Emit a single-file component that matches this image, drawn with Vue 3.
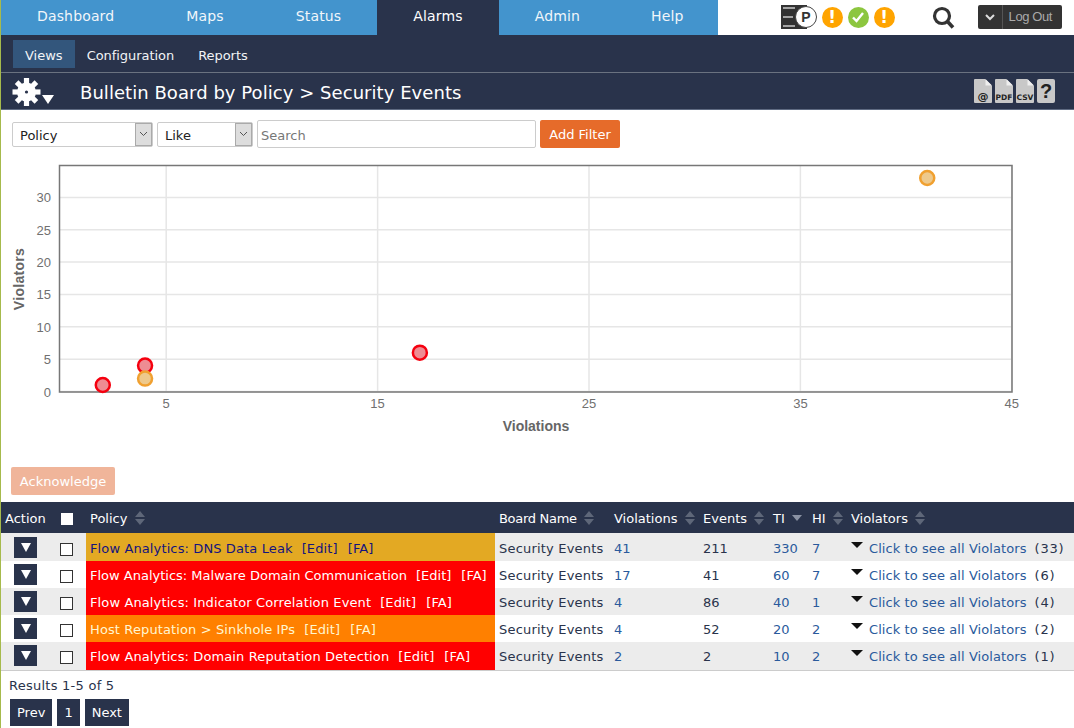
<template>
  <div class="page">
    <div class="topbar">
      <ul class="tabs">
        <li v-for="t in tabs" :key="t" :class="{ active: t === 'Alarms' }">{{ t }}</li>
      </ul>
      <div class="status-icons">
        <svg class="p-icon" width="36" height="24" viewBox="0 0 36 24">
          <rect x="0" y="0" width="26" height="24" fill="#333" />
          <path d="M2 3h4M6 3h8M2 12h4M6 12h6M2 21h4M6 21h8" stroke="#ccc" stroke-width="1.500" fill="none" />
          <circle cx="25" cy="12" r="10.500" fill="#fff" stroke="#444" stroke-width="1" />
          <text x="25" y="17" text-anchor="middle" class="p-letter">P</text>
        </svg>
        <span class="dot orange">!</span>
        <span class="dot green">
          <svg width="14" height="14" viewBox="0 0 14 14"><path d="M2 7.500l3.500 3.500L12 3" stroke="#fff" stroke-width="2.400" fill="none" /></svg>
        </span>
        <span class="dot orange">!</span>
      </div>
      <svg class="search-icon" width="23" height="24" viewBox="0 0 23 24">
        <circle cx="10" cy="10" r="7.500" fill="none" stroke="#333" stroke-width="3.200" />
        <path d="M15.500 15.500l5.500 6" stroke="#333" stroke-width="3.600" />
      </svg>
      <div class="logout">
        <span class="logout-arrow">
          <svg width="10" height="7" viewBox="0 0 10 7"><path d="M1 1l4 4 4-4" stroke="#ddd" stroke-width="2" fill="none" /></svg>
        </span>
        <span class="logout-text">Log Out</span>
      </div>
    </div>

    <div class="subnav">
      <span v-for="s in subTabs" :key="s" class="subtab" :class="{ active: s === 'Views' }">{{ s }}</span>
    </div>

    <div class="titlebar">
      <svg class="gear" width="44" height="30" viewBox="0 0 44 30">
        <g transform="translate(14.500 15)">
          <rect v-for="a in gearTeeth" :key="a" x="-2.600" y="-14" width="5.200" height="8" fill="#fff" :transform="`rotate(${a})`" />
          <circle r="9.500" fill="#fff" />
          <circle r="1.600" fill="#29334b" />
        </g>
        <path d="M30 18h12l-6 9z" fill="#fff" />
      </svg>
      <h1 class="title">Bulletin Board by Policy &gt; Security Events</h1>
      <div class="doc-icons">
        <svg v-for="d in docs" :key="d" width="18" height="24" viewBox="0 0 18 24">
          <path d="M0 1a1 1 0 0 1 1-1h10l7 7v16a1 1 0 0 1-1 1H1a1 1 0 0 1-1-1z" fill="#c8c8c8" />
          <path d="M11.500 0l6.500 6.500h-6.500z" fill="#eee" />
          <text x="9" y="20.500" text-anchor="middle" class="doc-label" :class="{ big: d === '@' }">{{ d }}</text>
        </svg>
        <div class="help-doc">?</div>
      </div>
    </div>

    <div class="filters">
      <div class="sel sel-policy"><span>Policy</span><i><svg width="9" height="6" viewBox="0 0 9 6"><path d="M1 1l3.500 3.500L8 1" stroke="#555" fill="none" /></svg></i></div>
      <div class="sel sel-like"><span>Like</span><i><svg width="9" height="6" viewBox="0 0 9 6"><path d="M1 1l3.500 3.500L8 1" stroke="#555" fill="none" /></svg></i></div>
      <input class="search" type="text" placeholder="Search" />
      <button class="add-filter">Add Filter</button>
    </div>

    <svg class="chart" width="1073" height="290" viewBox="0 0 1073 290">
      <g transform="translate(-1 -155)">
        <line v-for="x in xTicks" :key="'vx' + x" :x1="xPos(x)" :x2="xPos(x)" y1="165" y2="392" stroke="#e6e6e6" stroke-width="1.500" />
        <line v-for="y in yTicks" :key="'hy' + y" x1="59" x2="1012" :y1="yPos(y)" :y2="yPos(y)" stroke="#e6e6e6" stroke-width="1.500" />
        <path d="M59.500 165.500H1012V392H59.500z" fill="none" stroke="#777" stroke-width="1.500" />
        <text v-for="x in xTicks" :key="'tx' + x" :x="xPos(x)" y="408" text-anchor="middle" class="tick">{{ x }}</text>
        <text v-for="y in yTicks" :key="'ty' + y" x="51" :y="yPos(y) + 5" text-anchor="end" class="tick">{{ y }}</text>
        <text x="536" y="431" text-anchor="middle" class="axis-label">Violations</text>
        <text transform="translate(24 279) rotate(-90)" text-anchor="middle" class="axis-label y-label">Violators</text>
        <circle v-for="p in points" :key="p.x + '-' + p.y" :cx="xPos(p.x)" :cy="yPos(p.y)" r="7" :fill="p.fill" :stroke="p.stroke" stroke-width="2.500" />
      </g>
    </svg>

    <div class="ack-row"><button class="ack">Acknowledge</button></div>

    <table class="grid">
      <colgroup>
        <col style="width: 51px" />
        <col style="width: 34px" />
        <col style="width: 409px" />
        <col style="width: 115px" />
        <col style="width: 89px" />
        <col style="width: 70px" />
        <col style="width: 39px" />
        <col style="width: 39px" />
        <col />
      </colgroup>
      <thead>
        <tr>
          <th class="th-action">Action</th>
          <th class="th-check"><span class="head-box"></span></th>
          <th v-for="h in heads" :key="h">
            {{ h }}
            <svg v-if="h === 'TI'" class="sort" width="12" height="14" viewBox="0 0 12 14"><path d="M1 4h10l-5 6z" fill="#8a92a3" /></svg>
            <svg v-else class="sort" width="12" height="14" viewBox="0 0 12 14"><path d="M1 6l5-6 5 6zM1 8h10l-5 6z" fill="#5e6779" /></svg>
          </th>
        </tr>
      </thead>
      <tbody>
        <tr v-for="r in rows" :key="r.policy" class="row">
          <td class="td-action"><span class="act-btn"><svg width="10" height="9" viewBox="0 0 10 9"><path d="M0 0h10L5 9z" fill="#fff" /></svg></span></td>
          <td class="td-check"><span class="box"></span></td>
          <td class="policy" :class="r.level">{{ r.policy }}<span class="tag">[Edit]</span><span class="tag">[FA]</span></td>
          <td class="board">Security Events</td>
          <td><a>{{ r.violations }}</a></td>
          <td>{{ r.events }}</td>
          <td><a>{{ r.ti }}</a></td>
          <td><a>{{ r.hi }}</a></td>
          <td class="violators">
            <svg class="caret" width="12" height="6" viewBox="0 0 12 6"><path d="M0 0h12L6 6z" fill="#111" /></svg>
            <a>Click to see all Violators</a><span class="count">({{ r.count }})</span>
          </td>
        </tr>
      </tbody>
    </table>

    <div class="results">Results 1-5 of 5</div>
    <div class="pager">
      <span class="pg">Prev</span>
      <span class="pg">1</span>
      <span class="pg">Next</span>
    </div>
  </div>
</template>

<script setup>
const tabs = ["Dashboard", "Maps", "Status", "Alarms", "Admin", "Help"];
const subTabs = ["Views", "Configuration", "Reports"];
const docs = ["@", "PDF", "CSV"];
const gearTeeth = [0, 45, 90, 135, 180, 225, 270, 315];
const heads = ["Policy", "Board Name", "Violations", "Events", "TI", "HI", "Violators"];

const xTicks = [5, 15, 25, 35, 45];
const yTicks = [0, 5, 10, 15, 20, 25, 30];
const xPos = (x) => 60.5 + x * 21.14;
const yPos = (y) => 391.5 - y * 6.47;

const red = { fill: "#ee8c93", stroke: "#f5000f" };
const amber = { fill: "#eec98c", stroke: "#f0a030" };
const points = [
  { x: 41, y: 33, ...amber },
  { x: 2, y: 1, ...red },
  { x: 4, y: 4, ...red },
  { x: 4, y: 2, ...amber },
  { x: 17, y: 6, ...red },
];

const rows = [
  { policy: "Flow Analytics: DNS Data Leak", level: "major", violations: 41, events: 211, ti: 330, hi: 7, count: 33 },
  { policy: "Flow Analytics: Malware Domain Communication", level: "critical", violations: 17, events: 41, ti: 60, hi: 7, count: 6 },
  { policy: "Flow Analytics: Indicator Correlation Event", level: "critical", violations: 4, events: 86, ti: 40, hi: 1, count: 4 },
  { policy: "Host Reputation > Sinkhole IPs", level: "high", violations: 4, events: 52, ti: 20, hi: 2, count: 2 },
  { policy: "Flow Analytics: Domain Reputation Detection", level: "critical", violations: 2, events: 2, ti: 10, hi: 2, count: 1 },
];
</script>

<style>
html,
body {
  margin: 0;
  overflow: hidden;
  background: #fff;
}
</style>

<style scoped>
.page {
  width: 1073px;
  height: 728px;
  overflow: hidden;
  border-left: 1px solid #a6ba4c;
  font-family: "DejaVu Sans", Verdana, sans-serif;
  font-size: 13px;
  color: #29334b;
}

.topbar {
  height: 35px;
  display: flex;
  align-items: flex-start;
}

.tabs {
  list-style: none;
  margin: 0;
  padding: 0;
  display: flex;
  background: #4394cd;
  color: #f1f6fa;
}

.tabs li {
  height: 35px;
  line-height: 32px;
  padding: 0 36px;
  font-size: 14px;
  letter-spacing: 0.15px;
}

.tabs li:nth-child(5) {
  padding-right: 35px;
}

.tabs li:last-child {
  padding-right: 34px;
}

.tabs li.active {
  background: #29334b;
  color: #fff;
}

.status-icons {
  display: flex;
  align-items: center;
  gap: 5px;
  margin: 5px 0 0 63px;
  height: 24px;
}

.p-letter {
  font-family: "Liberation Sans", sans-serif;
  font-weight: 700;
  font-size: 14px;
  fill: #333;
}

.dot {
  width: 21px;
  height: 21px;
  border-radius: 50%;
  display: flex;
  align-items: center;
  justify-content: center;
  color: #fff;
  font-weight: 700;
  font-size: 17px;
}

.dot.orange {
  background: #ffa400;
}

.dot.green {
  background: #8cc63f;
}

.search-icon {
  margin: 6px 0 0 37px;
}

.logout {
  display: flex;
  height: 24px;
  margin: 5px 0 0 23px;
  background: #333;
  border-radius: 2px;
  color: #aaa;
  font-family: "Liberation Sans", sans-serif;
  font-size: 13px;
  letter-spacing: -0.4px;
  line-height: 24px;
}

.logout-arrow {
  width: 24px;
  display: flex;
  align-items: center;
  justify-content: center;
  border-right: 1px solid #555;
}

.logout-text {
  padding: 0 10px 0 6px;
}

.subnav {
  height: 37px;
  box-sizing: border-box;
  padding: 5px 0 0 12px;
  background: #29334b;
  display: flex;
  gap: 0;
}

.subtab {
  height: 28px;
  line-height: 31px;
  padding: 0 12px;
  color: #f1f3f6;
  font-size: 13px;
  letter-spacing: -0.05px;
}

.subtab.active {
  background: #33567c;
  letter-spacing: 0;
}

.titlebar {
  height: 38px;
  box-sizing: border-box;
  border-top: 1px solid #6a7280;
  border-bottom: 1px solid #5f6b82;
  background: #29334b;
  display: flex;
  align-items: center;
  padding-left: 11px;
}

.gear {
  margin-top: 2px;
}

.title {
  margin: 2px 0 0 24px;
  color: #fff;
  font-size: 18px;
  font-weight: 400;
  letter-spacing: 0.05px;
}

.doc-icons {
  margin-left: auto;
  margin-right: 19px;
  display: flex;
  gap: 3px;
  align-items: center;
}

.doc-label {
  font-family: "DejaVu Sans", sans-serif;
  font-weight: 700;
  font-size: 7.5px;
  fill: #222;
}

.doc-label.big {
  font-size: 11px;
}

.help-doc {
  width: 18px;
  height: 24px;
  background: #c8c8c8;
  border-radius: 2px;
  text-align: center;
  color: #222;
  font-family: "Liberation Sans", sans-serif;
  font-weight: 700;
  font-size: 20px;
  line-height: 24px;
}

.filters {
  height: 45px;
  box-sizing: border-box;
  display: flex;
  align-items: center;
  padding: 3px 0 0 11px;
}

.sel {
  height: 25px;
  box-sizing: border-box;
  border: 1px solid #ccc;
  border-radius: 2px;
  display: flex;
  align-items: center;
  justify-content: space-between;
  padding-left: 7px;
  color: #222;
  font-size: 13px;
}

.sel span {
  padding-top: 2px;
}

.sel i {
  width: 17px;
  height: 23px;
  background: #ddd;
  border: 1px solid #aaa;
  display: flex;
  justify-content: center;
  padding-top: 7px;
  box-sizing: border-box;
}

.sel-policy {
  width: 141px;
  margin-right: 4px;
}

.sel-like {
  width: 96px;
  margin-right: 4px;
}

.search {
  width: 279px;
  height: 28px;
  box-sizing: border-box;
  border: 1px solid #ccc;
  border-radius: 2px;
  padding: 2px 3px 0;
  font: inherit;
  margin-right: 4px;
}

.search::placeholder {
  color: #777;
}

.add-filter {
  width: 80px;
  height: 28px;
  border: 0;
  border-radius: 2px;
  background: #e66b2a;
  color: #fff;
  font: inherit;
  padding: 0;
}

.chart {
  display: block;
}

.tick {
  font-family: "Liberation Sans", sans-serif;
  font-size: 13px;
  fill: #707070;
}

.axis-label {
  font-family: "Liberation Sans", sans-serif;
  font-size: 14px;
  font-weight: 700;
  fill: #666;
}

.y-label {
  letter-spacing: 0.3px;
}

.ack-row {
  height: 57px;
  padding: 22px 0 0 10px;
  box-sizing: border-box;
}

.ack {
  width: 104px;
  height: 28px;
  border: 0;
  border-radius: 2px;
  background: #f0b59a;
  color: #fff;
  font: inherit;
  padding: 0;
}

.grid {
  width: 1073px;
  table-layout: fixed;
  border-collapse: collapse;
  border-bottom: 1px solid #ccc;
}

.grid th {
  height: 31px;
  padding: 1px 0 0 4px;
  box-sizing: border-box;
  background: #29334b;
  color: #fff;
  font-weight: 400;
  text-align: left;
  white-space: nowrap;
}

.grid th:nth-child(4) {
  letter-spacing: -0.3px;
}

.grid .th-action {
  padding-left: 4px;
}

.grid .th-check {
  padding: 0 0 0 9px;
}

.head-box {
  display: block;
  width: 12px;
  height: 12px;
  margin-top: 3px;
  background: #fff;
}

.sort {
  vertical-align: -2px;
  margin-left: 2px;
}

.row {
  height: 27px;
}

.row:first-child,
.row:last-child {
  height: 28px;
}

.row:nth-child(odd) {
  background: #ececec;
}

.grid td {
  padding: 1px 0 0 4px;
  white-space: nowrap;
}

.grid .row:first-child td {
  padding-top: 3px;
}

.grid a {
  color: #2a5a9c;
}

.grid .td-action,
.grid .row:first-child .td-action {
  padding: 0 0 0 13px;
}

.act-btn {
  width: 23px;
  height: 21px;
  background: #29334b;
  display: flex;
  align-items: center;
  justify-content: center;
}

.grid .td-check {
  padding-left: 8px;
}

.box {
  display: block;
  width: 11px;
  height: 11px;
  margin-top: 2px;
  border: 1px solid #333;
  background: #fff;
}

.policy {
  letter-spacing: 0.12px;
}

.row:nth-child(2) .policy {
  letter-spacing: 0;
}

.policy .tag {
  margin-left: 9px;
}

.policy .tag + .tag {
  margin-left: 10px;
}

.policy.major {
  background: #e3a923;
  color: #14147e;
}

.policy.critical {
  background: #ff0000;
  color: #fff;
}

.policy.high {
  background: #ff8000;
  color: #fff6d0;
}

.board {
  letter-spacing: 0.2px;
}

.violators a {
  letter-spacing: 0.08px;
}

.caret {
  vertical-align: 5px;
  margin-right: 6px;
}

.count {
  margin-left: 8px;
  letter-spacing: 0.8px;
}

.results {
  padding: 7px 0 0 8px;
  height: 20px;
  letter-spacing: 0.25px;
}

.pager {
  display: flex;
  gap: 5px;
  padding: 1px 0 0 9px;
}

.pg {
  height: 27px;
  line-height: 28px;
  padding: 0 7px;
  background: #29334b;
  color: #fff;
}
</style>
